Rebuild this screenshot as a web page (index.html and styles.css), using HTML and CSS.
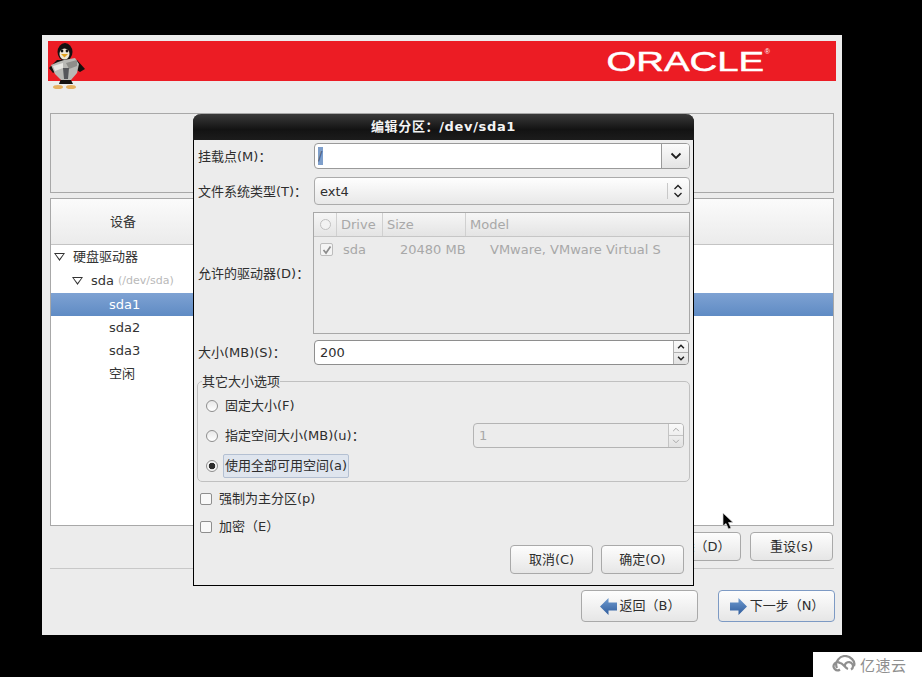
FILE: index.html
```html
<!DOCTYPE html>
<html lang="zh">
<head>
<meta charset="utf-8">
<title>编辑分区</title>
<link rel="stylesheet" href="styles.css">
</head>
<body>
<main class="window">
  <header class="banner">
    <svg class="penguin" width="38" height="47" viewBox="0 0 38 47">
      <path d="M1 25 L9 17 L29 17 L37 26 L32 29 L27 26 L11 26 L5 30 Z" fill="#16100e"/>
      <ellipse cx="17" cy="9" rx="7.5" ry="9" fill="#141010"/>
      <ellipse cx="16.5" cy="11" rx="5" ry="5.5" fill="#efe6d4"/>
      <circle cx="14" cy="8" r="1.4" fill="#111"/><circle cx="19" cy="8" r="1.4" fill="#111"/>
      <path d="M13 11 L20 11 L16.5 14.5 Z" fill="#e0a020"/>
      <path d="M14 33 L21 33 L25 41 L11 41 Z" fill="#15110f"/>
      <path d="M3 22 L10 19 L16 17 L27 15 L31 21 L29 30 L23 37 L13 37 L7 31 Z" fill="#b9b9b5"/>
      <path d="M5 23 L15 20 L15 25 L7 28 Z" fill="#e8e8e4"/>
      <path d="M18 20 L29 17 L29 23 L21 26 Z" fill="#8e8e8a"/>
      <path d="M15 25 L21 25 L20 36 L16 36 Z" fill="#55565a"/>
      <ellipse cx="10" cy="44" rx="5" ry="2" fill="#e6b060"/>
      <ellipse cx="23" cy="44" rx="5" ry="2" fill="#e6b060"/>
    </svg>
    <div class="logo"><span class="logo-word">ORACLE</span><sup class="logo-mark">®</sup></div>
  </header>

  <section class="info-panel"></section>

  <section class="device-panel">
    <div class="device-head"><span>设备</span></div>
    <ul class="tree">
      <li class="row level0"><i class="tri"></i>硬盘驱动器</li>
      <li class="row level1"><i class="tri"></i>sda <small>(/dev/sda)</small></li>
      <li class="row level2 selected">sda1</li>
      <li class="row level2">sda2</li>
      <li class="row level2">sda3</li>
      <li class="row level2">空闲</li>
    </ul>
  </section>

  <div class="actions">
    <button class="btn act">删除（D）</button>
    <button class="btn act">重设(s)</button>
  </div>
  <hr class="sep">
  <nav class="wizard">
    <button class="btn nav">
      <svg width="19" height="19" viewBox="0 0 19 19"><defs><linearGradient id="ga" x1="0" y1="0" x2="0" y2="1"><stop offset="0" stop-color="#6f9bd0"/><stop offset="1" stop-color="#2f5c9c"/></linearGradient></defs><path d="M1 9.5 L9.5 1 L9.5 5.5 L18 5.5 L18 13.5 L9.5 13.5 L9.5 18 Z" fill="url(#ga)"/></svg>
      <span>返回（B）</span>
    </button>
    <button class="btn nav default">
      <svg width="19" height="19" viewBox="0 0 19 19"><defs><linearGradient id="gb" x1="0" y1="0" x2="0" y2="1"><stop offset="0" stop-color="#6f9bd0"/><stop offset="1" stop-color="#2f5c9c"/></linearGradient></defs><path d="M18 9.5 L9.5 1 L9.5 5.5 L1 5.5 L1 13.5 L9.5 13.5 L9.5 18 Z" fill="url(#gb)"/></svg>
      <span>下一步（N）</span>
    </button>
  </nav>
</main>

<section class="dialog">
  <h1 class="dialog-title">编辑分区<span class="fw">：</span>/dev/sda1</h1>
  <div class="form">
    <label class="lbl r1"><span>挂载点(M)<span class="fw">：</span></span></label>
    <div class="combo entry r1">
      <span class="combo-text"><span class="sel">/</span></span>
      <span class="combo-btn wide"><svg width="12" height="8" viewBox="0 0 12 8"><path d="M1.5 1.5 L6 6 L10.5 1.5" class="chev"/></svg></span>
    </div>

    <label class="lbl r2"><span>文件系统类型(T)<span class="fw">：</span></span></label>
    <div class="combo select r2">
      <span class="combo-text">ext4</span>
      <span class="combo-btn"><svg width="10" height="14" viewBox="0 0 10 14"><path d="M1.5 5 L5 1.5 L8.5 5 M1.5 9 L5 12.5 L8.5 9" class="chev thin"/></svg></span>
    </div>

    <label class="lbl r3"><span>允许的驱动器(D)<span class="fw">：</span></span></label>
    <div class="drives r3">
      <div class="drives-head">
        <span class="c0"><i class="hcirc"></i></span><span class="c1">Drive</span><span class="c2">Size</span><span class="c3">Model</span>
      </div>
      <div class="drives-row">
        <span class="c0"><i class="dcheck"><svg width="10" height="10" viewBox="0 0 10 10"><path d="M1.5 5 L4 8 L8.5 1.5" fill="none" stroke="#8c8c8c" stroke-width="1.7"/></svg></i></span>
        <span class="v1">sda</span><span class="v2">20480 MB</span><span class="v3">VMware, VMware Virtual S</span>
      </div>
    </div>

    <label class="lbl r4"><span>大小(MB)(S)<span class="fw">：</span></span></label>
    <div class="spin r4 size">
      <span class="spin-text">200</span>
      <span class="spin-btns">
        <span><svg width="8" height="5" viewBox="0 0 9 6"><path d="M1 5 L4.5 1.5 L8 5" class="chev"/></svg></span>
        <span><svg width="8" height="5" viewBox="0 0 9 6"><path d="M1 1 L4.5 4.5 L8 1" class="chev"/></svg></span>
      </span>
    </div>
  </div>

  <fieldset class="group">
    <legend>其它大小选项</legend>
    <div class="opt"><i class="radio"></i><span>固定大小(F)</span></div>
    <div class="opt">
      <i class="radio"></i><span>指定空间大小(MB)(u)<span class="fw">：</span></span>
      <div class="spin disabled">
        <span class="spin-text">1</span>
        <span class="spin-btns">
          <span><svg width="8" height="5" viewBox="0 0 9 6"><path d="M1 5 L4.5 1.5 L8 5" class="chev dim"/></svg></span>
          <span><svg width="8" height="5" viewBox="0 0 9 6"><path d="M1 1 L4.5 4.5 L8 1" class="chev dim"/></svg></span>
        </span>
      </div>
    </div>
    <div class="opt"><i class="radio on"></i><span class="focus">使用全部可用空间(a)</span></div>
  </fieldset>

  <div class="chk first"><i class="box"></i><span>强制为主分区(p)</span></div>
  <div class="chk"><i class="box"></i><span>加密（E）</span></div>

  <div class="dialog-actions">
    <button class="btn dlg">取消(C)</button>
    <button class="btn dlg">确定(O)</button>
  </div>
</section>

<svg class="cursor" width="14" height="20" viewBox="0 0 14 20"><path d="M1 1 L1 14 L4 11.5 L6.5 17 L9 16 L6.5 10.5 L11 10.5 Z" fill="#000" stroke="#d8d8d8" stroke-width="0.7"/></svg>

<aside class="watermark">
  <svg width="26" height="19" viewBox="0 0 26 19"><path d="M5 13 C2 7 8 1 13 1 C18 1 24 6 22 11 M8 14.5 A4 4 0 1 1 8 8 C11 8 13 13 16 14 M13 12 A4 4 0 1 1 19 14.5" fill="none" stroke="#8f8f8f" stroke-width="2.2"/></svg>
  <span>亿速云</span>
</aside>
</body>
</html>
```
FILE: styles.css
```css
* { box-sizing: border-box; }
html, body { margin: 0; height: 100%; }
body {
  background: #000;
  width: 922px;
  height: 677px;
  overflow: hidden;
  padding: 35px 0 0 42px;
  font: 13px/1.2 "DejaVu Sans", "Noto Sans CJK SC", sans-serif;
  color: #2e2e2e;
  position: relative;
}
button { font: inherit; color: inherit; }
.fw { font-family: "Noto Sans CJK TC", sans-serif; line-height: 0; }

.window {
  width: 800px;
  height: 600px;
  background: #ececec;
  padding: 6px 8px 0 8px;
}

.banner {
  height: 40px;
  margin: 0 -2px 0 -2px;
  width: 788px;
  background: #ec1c24;
  display: flex;
  justify-content: flex-end;
  align-items: center;
  position: relative;
  padding: 2px 66px 0 0;
}
.penguin { position: absolute; left: 0; top: 2px; }
.logo { display: flex; align-items: flex-start; color: #fff; position: relative; }
.logo-word {
  display: inline-block;
  font: 28px/28px "Liberation Sans", sans-serif;
  transform: scaleX(1.37);
  transform-origin: right center;
  -webkit-text-stroke: 0.5px #fff;
}
.logo-mark { font: 7px/8px "Liberation Sans", sans-serif; margin-left: 1px; }

.info-panel {
  height: 80px;
  margin-top: 32px;
  border: 1px solid #a8a8a8;
  background: #ececec;
}

.device-panel {
  height: 328px;
  margin-top: 5px;
  border: 1px solid #a8a8a8;
  background: #fff;
  overflow: hidden;
}
.device-head {
  height: 46px;
  background: linear-gradient(#fbfbfb, #ebebeb);
  border-bottom: 1px solid #c4c4c4;
  padding-left: 59px;
  display: flex;
  align-items: center;
  color: #333;
}
.tree { list-style: none; margin: 0; padding: 0; }
.row { height: 23.2px; display: flex; align-items: center; color: #333; }
.row:first-child { height: 24px; }
.row:nth-child(2) { height: 24px; }
.row small { font-size: 11px; color: #b9b9b9; margin-left: 4px; }
.level0 { padding-left: 3px; }
.level1 { padding-left: 21px; }
.level2 { padding-left: 58px; }
.selected { background: linear-gradient(#7ea2d3, #5f8bc4); color: #fff; }
.tri {
  width: 11px; height: 8px; margin-right: 8px;
  background: #333;
  clip-path: polygon(0 0, 100% 0, 50% 100%, 0 0, 15% 12%, 50% 75%, 85% 12%, 15% 12%);
}

.btn {
  background: linear-gradient(#fdfdfd, #e6e6e6);
  border: 1px solid #a9a9a9;
  border-radius: 4px;
  display: flex;
  align-items: center;
  justify-content: center;
  padding: 0;
}
.actions {
  display: flex;
  justify-content: flex-end;
  gap: 9px;
  height: 29px;
  margin-top: 6px;
  padding-right: 1px;
}
.act { width: 83px; height: 29px; }
.sep {
  border: 0;
  border-top: 1px solid #c8c8c8;
  height: 0;
  margin: 7px 0 0 0;
}
.wizard {
  display: flex;
  justify-content: flex-end;
  gap: 20px;
  margin-top: 21px;
  margin-right: -1px;
}
.nav { width: 117px; height: 32px; gap: 2px; }
.nav.default { border-color: #7d9ac4; }

.dialog {
  position: absolute;
  left: 193px;
  top: 114px;
  width: 501px;
  height: 472px;
  background: #ececec;
  border: 1px solid #000;
  border-top: 0;
  border-radius: 8px 8px 0 0;
}
.dialog-title {
  margin: 0 -1px;
  height: 26px;
  background: linear-gradient(#3a3a3a, #131313 60%, #1c1c1c);
  border-radius: 8px 8px 0 0;
  color: #f4f4f4;
  font-size: 13px;
  font-weight: bold;
  letter-spacing: 0.65px;
  text-align: center;
  line-height: 26px;
}
.form {
  display: grid;
  grid-template-columns: 116px 376px;
  grid-template-rows: 34px 35px 128px 25px;
  padding: 3px 0 0 4px;
  align-items: start;
}
.r1 { height: 26px; }
.r2 { height: 28px; }
.r3 { height: 122px; }
.r4 { height: 25px; }
.lbl { color: #2e2e2e; white-space: nowrap; display: flex; align-items: center; padding-top: 1px; }

.combo, .spin {
  display: flex;
  align-items: stretch;
  border: 1px solid #8e8e8e;
  border-radius: 4px;
  overflow: hidden;
}
.entry { background: #fff; border-color: #9a9a9a; }
.select { background: linear-gradient(#fefefe, #e8e8e8); border-color: #ababab; }
.combo-text { flex: 1; padding: 1px 5px 0; display: flex; align-items: center; }
.entry .combo-text { padding: 0 3px; }
.sel { background: #7f9fcb; color: #4a5d7a; height: 18px; width: 5px; line-height: 18px; display: block; overflow: hidden; }
.combo-btn {
  width: 22px;
  display: flex;
  align-items: center;
  justify-content: center;
}
.combo-btn.wide {
  width: 28px;
  background: linear-gradient(#fbfbfb, #e4e4e4);
  border-left: 1px solid #9a9a9a;
}
.select .combo-btn { position: relative; }
.select .combo-btn::before {
  content: "";
  position: absolute;
  left: 0; top: 5px; bottom: 5px;
  border-left: 1px solid #c8c8c8;
}
.chev { fill: none; stroke: #1f1f1f; stroke-width: 1.8; }
.chev.thin { stroke-width: 1.3; }
.chev.dim { stroke: #a8a8a8; stroke-width: 1.2; }

.drives {
  border: 1px solid #a8a8a8;
  background: #ececec;
  margin-left: -1px;
  color: #a8a8a8;
}
.drives-head {
  height: 24px;
  display: flex;
  align-items: center;
  background: linear-gradient(#f6f6f6, #e4e4e4);
  border-bottom: 1px solid #c6c6c6;
}
.drives-head span { height: 100%; display: flex; align-items: center; border-right: 1px solid #d0d0d0; padding-left: 4px; }
.drives-head .c3 { border-right: 0; }
.c0 { width: 23px; justify-content: center; padding: 0 !important; }
.c1 { width: 46px; }
.c2 { width: 83px; }
.hcirc { width: 11px; height: 11px; border: 1px solid #c0c0c0; border-radius: 50%; background: #f2f2f2; }
.drives-row { height: 25px; display: flex; align-items: center; position: relative; }
.drives-row .c0 { display: flex; justify-content: center; margin-left: 1px; }
.dcheck { width: 13px; height: 13px; border: 1px solid #bdbdbd; border-radius: 2px; background: #f4f4f4; display: flex; align-items: center; justify-content: center; }
.v1 { width: 57px; margin-left: 5px; }
.v2 { width: 90px; }

.spin { background: #fff; border-color: #8e8e8e; }
.spin.size { width: 375px; }
.spin-text { flex: 1; padding: 0 5px; display: flex; align-items: center; }
.spin-btns { width: 15px; display: flex; flex-direction: column; border-left: 1px solid #b0b0b0; background: linear-gradient(#fafafa, #e2e2e2); }
.spin-btns span { flex: 1; display: flex; align-items: center; justify-content: center; }
.spin-btns span + span { border-top: 1px solid #b0b0b0; }

.group {
  width: 493px;
  height: 108px;
  margin: 9px 0 0 3px;
  padding: 0 0 0 8px;
  border: 1px solid #c0c0c0;
  border-radius: 5px;
  min-width: 0;
}
.group legend { padding: 0; margin-left: -4px; line-height: 15px; }
.opt { height: 30px; display: flex; align-items: center; gap: 7px; position: relative; }
.opt:first-of-type { margin-top: 2px; }
.radio {
  width: 12px; height: 12px; flex: none;
  border: 1px solid #8e8e8e; border-radius: 50%;
  background: linear-gradient(#e8e8e8, #fff);
}
.radio.on { background: radial-gradient(circle, #2c2c2c 0 3px, #f6f6f6 3.6px); }
.focus {
  background: #dfe5ee;
  border: 1px solid #b4c0d2;
  border-radius: 2px;
  margin-left: -2px;
  padding: 3px 1px;
  height: 24px;
  line-height: 16px;
}
.spin.disabled {
  position: absolute;
  left: 267px;
  top: 2px;
  width: 211px;
  height: 25px;
  background: #ececec;
  border-color: #b4b4b4;
  color: #a8a8a8;
}
.disabled .spin-btns { border-color: #c4c4c4; }
.disabled .spin-btns span + span { border-color: #c4c4c4; }

.chk { height: 28px; display: flex; align-items: center; gap: 7px; padding-left: 6px; }
.chk.first { margin-top: 3px; }
.box { width: 12px; height: 12px; border: 1px solid #8e8e8e; border-radius: 2px; background: #f8f8f8; flex: none; }

.dialog-actions {
  display: flex;
  justify-content: flex-end;
  gap: 8px;
  margin-top: 4px;
  padding-right: 9px;
}
.dlg { width: 83px; height: 29px; }

.cursor { position: absolute; left: 722px; top: 512px; }

.watermark {
  position: absolute;
  left: 813px;
  top: 652px;
  width: 109px;
  height: 25px;
  background: #fff;
  display: flex;
  align-items: center;
  padding-left: 19px;
  gap: 2px;
  color: #8f8f8f;
  font-size: 15px;
  letter-spacing: 0.5px;
  font-family: "Noto Sans CJK SC", sans-serif;
}
```
